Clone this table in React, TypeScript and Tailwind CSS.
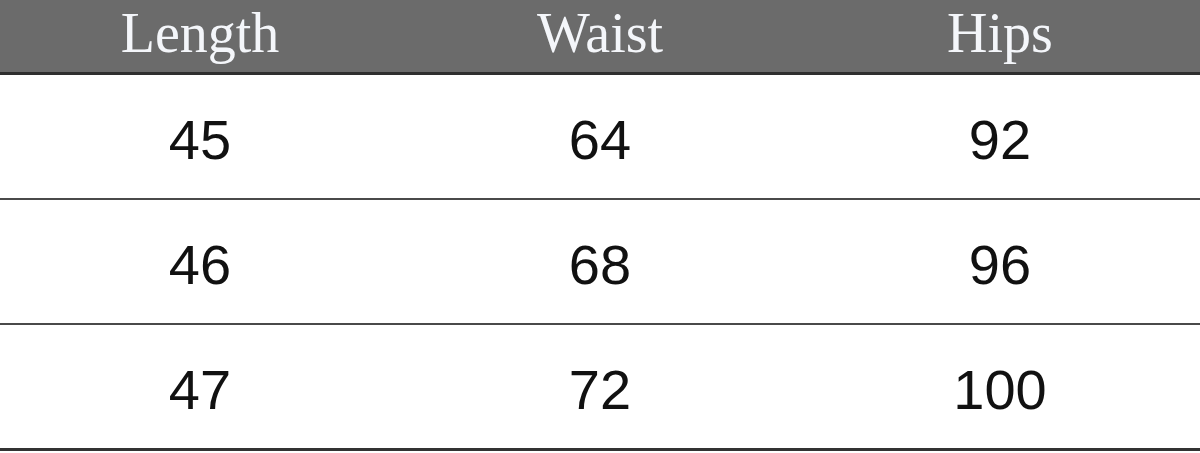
const rows = [
  ["45", "64", "92"],
  ["46", "68", "96"],
  ["47", "72", "100"],
];

const headers = ["Length", "Waist", "Hips"];

export default function App() {
  return (
    <div className="w-[1200px] h-[453px] bg-white overflow-hidden">
      <div className="grid grid-cols-3 h-[72px] bg-[#6b6b6b] border-b-[3px] border-[#2e2e2e] box-content">
        {headers.map((h) => (
          <div
            key={h}
            className="text-center text-[56px] leading-[66px] text-[#f4f6fa] font-['Liberation_Serif',serif]"
          >
            {h}
          </div>
        ))}
      </div>
      {rows.map((row, i) => (
        <div
          key={i}
          className={`grid grid-cols-3 h-[123px] box-content border-b-2 border-[#4a4a4a] ${
            i === rows.length - 1 ? "border-b-[3px] border-[#333]" : ""
          }`}
        >
          {row.map((v, j) => (
            <div
              key={j}
              className="text-center pt-[6px] text-[56px] leading-[117px] text-[#111] font-['Liberation_Sans',Arial,sans-serif]"
            >
              {v}
            </div>
          ))}
        </div>
      ))}
    </div>
  );
}
